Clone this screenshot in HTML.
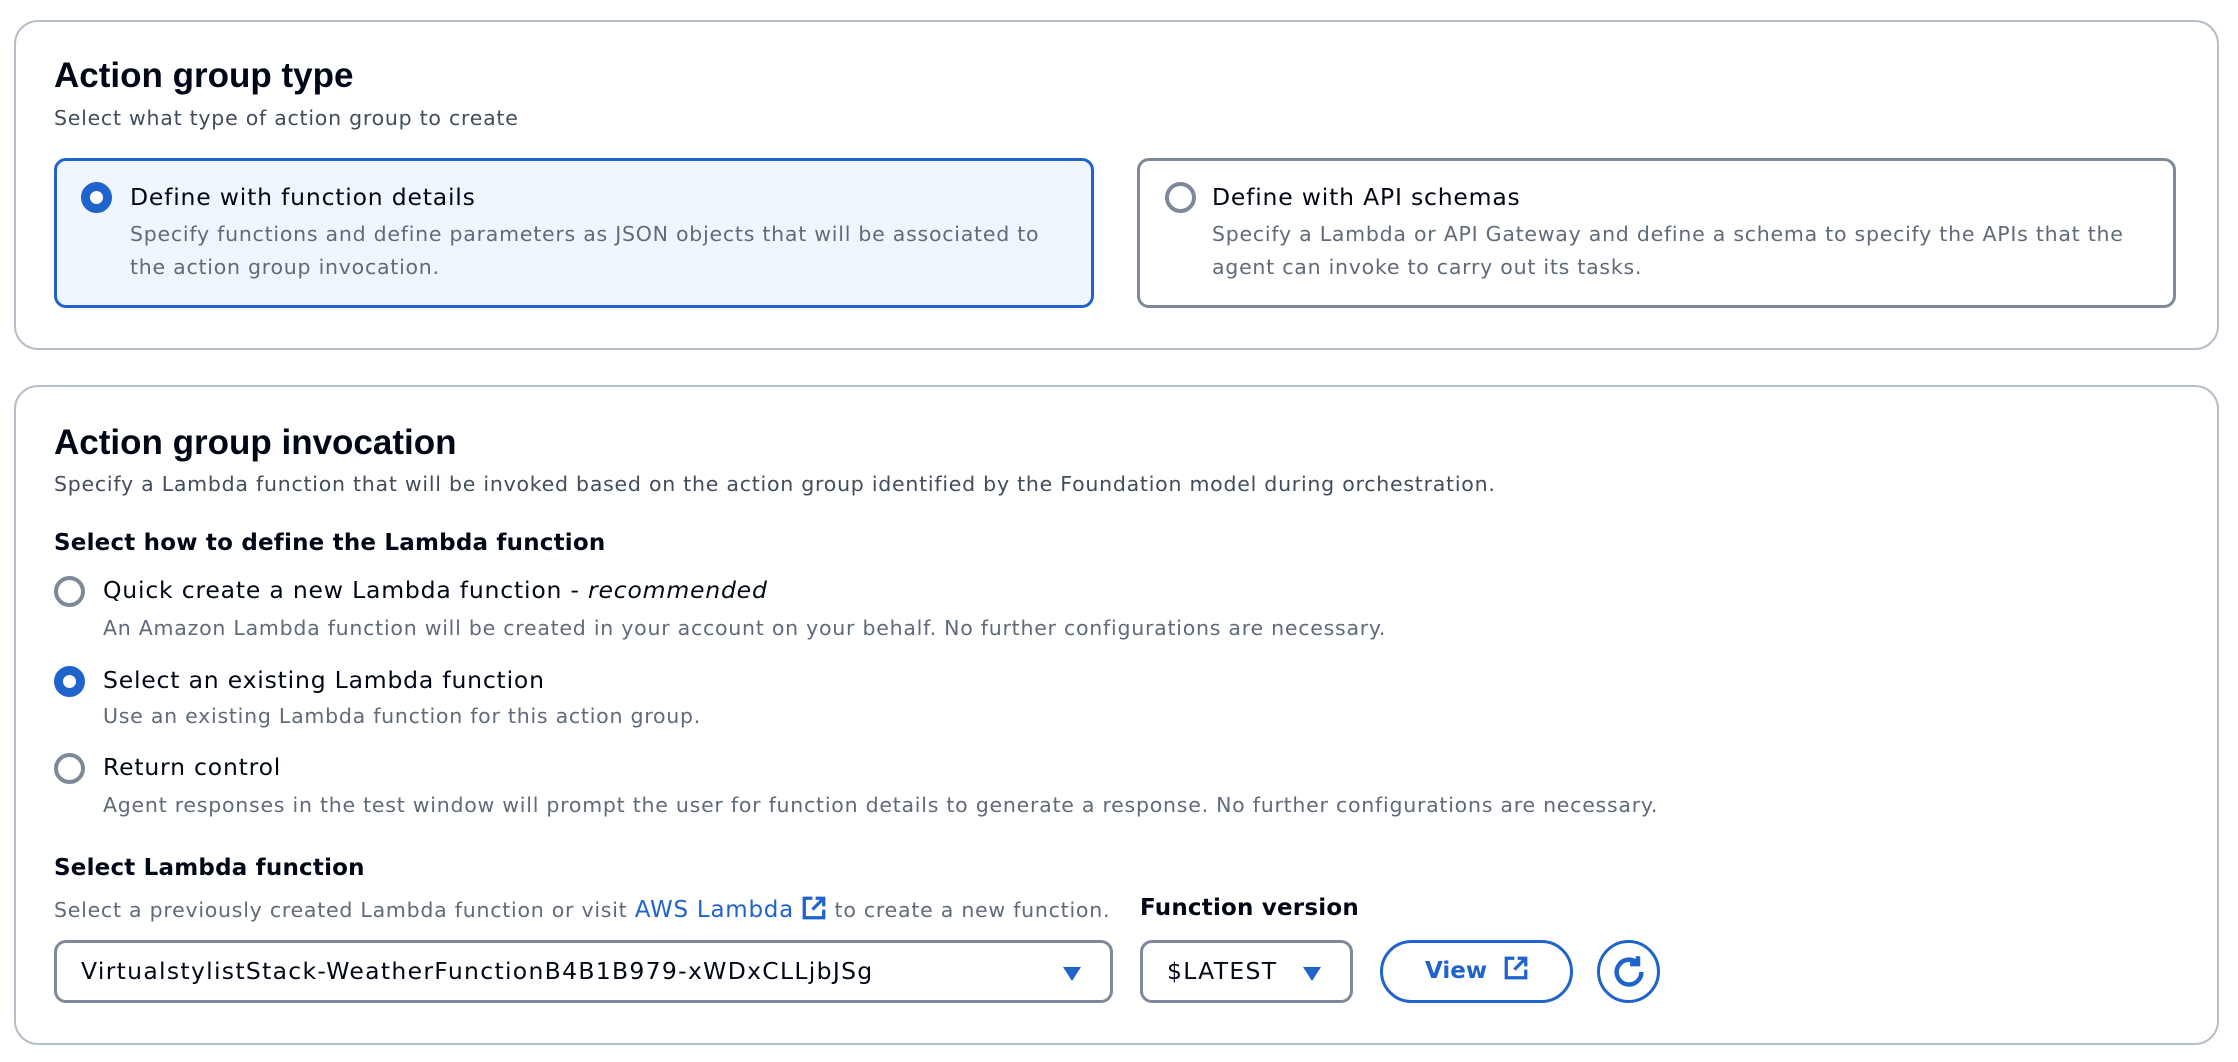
<!DOCTYPE html>
<html><head><meta charset="utf-8"><style>
*{box-sizing:border-box;margin:0;padding:0}
body{width:2238px;height:1062px;background:#fff;font-family:"DejaVu Sans","Liberation Sans",sans-serif;color:#000716;position:relative;overflow:hidden}
.abs{position:absolute;white-space:nowrap}
.card{position:absolute;left:14px;width:2205px;border:2px solid #b6bec9;border-radius:24px}
h2{position:absolute;font-family:"Liberation Sans",sans-serif;font-size:35px;font-weight:bold;white-space:nowrap}
.sub{font-size:20.5px;color:#414d5c;letter-spacing:0.75px}
.opt{position:absolute;top:158px;height:150px;border-radius:12px;border:3px solid #7d8998}
.radio{position:absolute;width:31px;height:31px;border-radius:50%;border:4px solid #7d8998;background:#fff}
.radio.on{border:9px solid #1f63cc}
.lbl{font-size:23.5px;color:#000716;letter-spacing:0.8px}
.desc{font-size:20.5px;color:#5f6b7a;line-height:33px;letter-spacing:0.75px}
.b{font-weight:bold;font-size:23px;letter-spacing:0.2px}
.box{position:absolute;top:940px;height:63px;border:3px solid #7d8998;border-radius:12px;font-size:23.5px;padding-left:24px;line-height:57px;letter-spacing:1.3px}
.tri{position:absolute;top:24px;width:0;height:0;border-left:9px solid transparent;border-right:9px solid transparent;border-top:14px solid #1f63cc}
</style></head><body>
<div class="card" style="top:20px;height:330px"></div>
<h2 style="left:54px;top:56px">Action group type</h2>
<div class="abs sub" style="left:54px;top:106px">Select what type of action group to create</div>
<div class="opt" style="left:54px;width:1040px;border-color:#1f63cc;background:#f0f6fd"></div>
<div class="radio on" style="left:81px;top:182px"></div>
<div class="abs lbl" style="left:130px;top:183px">Define with function details</div>
<div class="abs desc" style="left:130px;top:218px">Specify functions and define parameters as JSON objects that will be associated to<br>the action group invocation.</div>
<div class="opt" style="left:1137px;width:1039px"></div>
<div class="radio" style="left:1165px;top:182px"></div>
<div class="abs lbl" style="left:1212px;top:183px">Define with API schemas</div>
<div class="abs desc" style="left:1212px;top:218px">Specify a Lambda or API Gateway and define a schema to specify the APIs that the<br>agent can invoke to carry out its tasks.</div>

<div class="card" style="top:385px;height:660px"></div>
<h2 style="left:54px;top:423px">Action group invocation</h2>
<div class="abs sub" style="left:54px;top:472px">Specify a Lambda function that will be invoked based on the action group identified by the Foundation model during orchestration.</div>
<div class="abs lbl b" style="left:54px;top:530px">Select how to define the Lambda function</div>
<div class="radio" style="left:54px;top:576px"></div>
<div class="abs lbl" style="left:103px;top:576px">Quick create a new Lambda function - <i>recommended</i></div>
<div class="abs desc" style="left:103px;top:612px">An Amazon Lambda function will be created in your account on your behalf. No further configurations are necessary.</div>
<div class="radio on" style="left:54px;top:666px"></div>
<div class="abs lbl" style="left:103px;top:666px">Select an existing Lambda function</div>
<div class="abs desc" style="left:103px;top:700px">Use an existing Lambda function for this action group.</div>
<div class="radio" style="left:54px;top:753px"></div>
<div class="abs lbl" style="left:103px;top:753px">Return control</div>
<div class="abs desc" style="left:103px;top:789px">Agent responses in the test window will prompt the user for function details to generate a response. No further configurations are necessary.</div>
<div class="abs lbl b" style="left:54px;top:855px">Select Lambda function</div>
<div class="abs desc" style="left:54px;top:894px">Select a previously created Lambda function or visit <span style="color:#1f63cc;font-size:23px">AWS Lambda</span> <svg width="26" height="26" viewBox="0 0 16 16" style="vertical-align:-4px"><path d="M7 2H2v12h12V9M9 2h5v5M14 2L7 9" fill="none" stroke="#1f63cc" stroke-width="2"/></svg> to create a new function.</div>
<div class="abs lbl b" style="left:1140px;top:895px">Function version</div>
<div class="box" style="left:54px;width:1059px">VirtualstylistStack-WeatherFunctionB4B1B979-xWDxCLLjbJSg<div class="tri" style="left:1006px"></div></div>
<div class="box" style="left:1140px;width:213px">$LATEST<div class="tri" style="left:160px"></div></div>
<div class="abs" style="left:1380px;top:940px;width:193px;height:63px;border:3px solid #1f63cc;border-radius:32px;color:#1f63cc;font-size:23px;font-weight:bold;line-height:57px;padding-left:42px">View <svg width="26" height="26" viewBox="0 0 16 16" style="vertical-align:-3px;margin-left:8px"><path d="M7 2H2v12h12V9M9 2h5v5M14 2L7 9" fill="none" stroke="#1f63cc" stroke-width="2"/></svg></div>
<div class="abs" style="left:1597px;top:940px;width:63px;height:63px;border:3px solid #1f63cc;border-radius:50%"><svg width="36" height="36" viewBox="0 0 16 16" style="position:absolute;left:11px;top:11px"><path d="M13.5 8A5.5 5.5 0 1 1 11.5 3.8M12 1v3.5H8.5" fill="none" stroke="#1f63cc" stroke-width="2"/></svg></div>
</body></html>
